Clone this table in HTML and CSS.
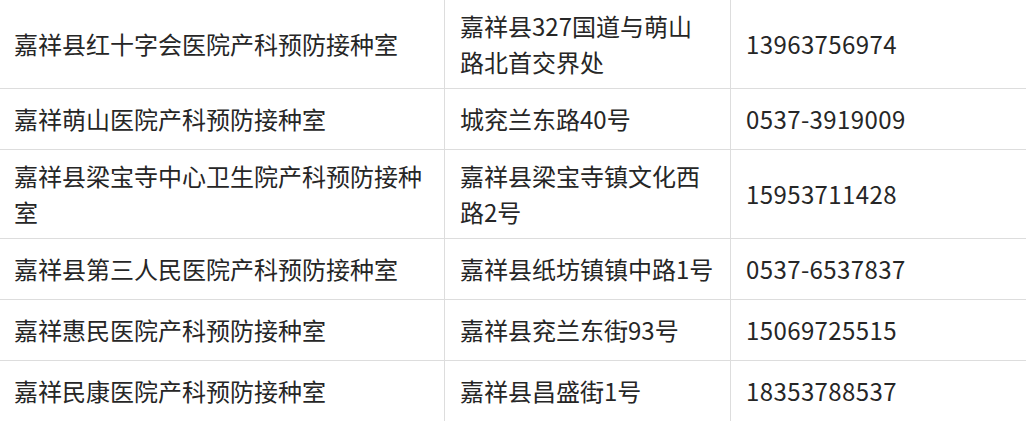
FILE: index.html
```html
<!DOCTYPE html>
<html lang="zh-CN">
<head>
<meta charset="utf-8">
<title>嘉祥县产科预防接种室</title>
<link rel="stylesheet" href="styles.css">
</head>
<body>
<table class="clinics">
  <colgroup>
    <col class="c-name">
    <col class="c-addr">
    <col class="c-tel">
  </colgroup>
  <tbody>
    <tr>
      <td>嘉祥县红十字会医院产科预防接种室</td>
      <td>嘉祥县327国道与萌山<br>路北首交界处</td>
      <td class="tel">13963756974</td>
    </tr>
    <tr>
      <td>嘉祥萌山医院产科预防接种室</td>
      <td>城兖兰东路40号</td>
      <td class="tel">0537-3919009</td>
    </tr>
    <tr>
      <td>嘉祥县梁宝寺中心卫生院产科预防接种室</td>
      <td>嘉祥县梁宝寺镇文化西路2号</td>
      <td class="tel">15953711428</td>
    </tr>
    <tr>
      <td>嘉祥县第三人民医院产科预防接种室</td>
      <td>嘉祥县纸坊镇镇中路1号</td>
      <td class="tel">0537-6537837</td>
    </tr>
    <tr>
      <td>嘉祥惠民医院产科预防接种室</td>
      <td>嘉祥县兖兰东街93号</td>
      <td class="tel">15069725515</td>
    </tr>
    <tr>
      <td>嘉祥民康医院产科预防接种室</td>
      <td>嘉祥县昌盛街1号</td>
      <td class="tel">18353788537</td>
    </tr>
  </tbody>
</table>
</body>
</html>
```

FILE: styles.css
```css
html, body {
  margin: 0;
  padding: 0;
  background: #ffffff;
  overflow: hidden;
}

.clinics {
  border-collapse: collapse;
  table-layout: fixed;
  width: 1132px;
  margin: -1px 0 0 -2px;
  font-family: "Noto Sans CJK SC", "Noto Sans", sans-serif;
  font-size: 24px;
  line-height: 36px;
  color: #262626;
}

.c-name { width: 446px; }
.c-addr { width: 286px; }
.c-tel { width: 400px; }

.clinics td {
  border: 1px solid #dddddd;
  height: 44px;
  padding: 8px 8px 8px 15px;
  vertical-align: middle;
  text-align: left;
}

.clinics td.tel {
  letter-spacing: 0.4px;
}
```
